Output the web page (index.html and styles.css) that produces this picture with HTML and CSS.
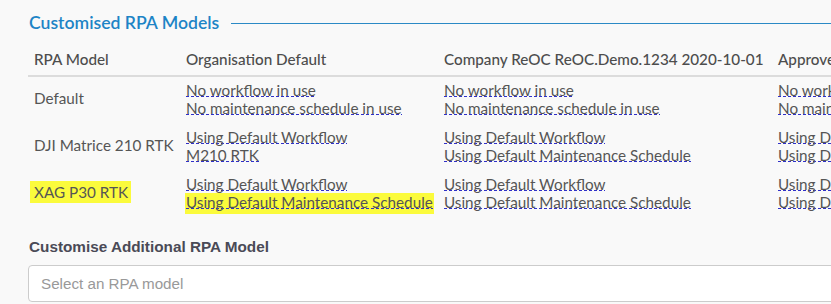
FILE: index.html
```html
<!DOCTYPE html>
<html>
<head>
<meta charset="utf-8">
<link rel="stylesheet" href="styles.css">
</head>
<body>
<div class="page">
  <div class="section-title">
    <h2>Customised RPA Models</h2>
    <div class="rule"></div>
  </div>
  <table class="models">
    <colgroup>
      <col class="c1"><col class="c2"><col class="c3"><col class="c4">
    </colgroup>
    <thead>
      <tr>
        <th>RPA Model</th>
        <th>Organisation Default</th>
        <th>Company ReOC ReOC.Demo.1234 2020-10-01</th>
        <th>Approved Operator</th>
      </tr>
    </thead>
    <tbody>
      <tr>
        <td class="model">Default</td>
        <td><div class="line"><a>No workflow in use</a></div><div class="line"><a>No maintenance schedule in use</a></div></td>
        <td><div class="line"><a>No workflow in use</a></div><div class="line"><a>No maintenance schedule in use</a></div></td>
        <td><div class="line"><a>No workflow in use</a></div><div class="line"><a>No maintenance schedule in use</a></div></td>
      </tr>
      <tr>
        <td class="model">DJI Matrice 210 RTK</td>
        <td><div class="line"><a>Using Default Workflow</a></div><div class="line"><a>M210 RTK</a></div></td>
        <td><div class="line"><a>Using Default Workflow</a></div><div class="line"><a>Using Default Maintenance Schedule</a></div></td>
        <td><div class="line"><a>Using Default Workflow</a></div><div class="line"><a>Using Default Maintenance Schedule</a></div></td>
      </tr>
      <tr>
        <td class="model"><span class="hl hl-model">XAG P30 RTK</span></td>
        <td><div class="line"><a>Using Default Workflow</a></div><div class="line hl-line"><a>Using Default Maintenance Schedule</a></div></td>
        <td><div class="line"><a>Using Default Workflow</a></div><div class="line"><a>Using Default Maintenance Schedule</a></div></td>
        <td><div class="line"><a>Using Default Workflow</a></div><div class="line"><a>Using Default Maintenance Schedule</a></div></td>
      </tr>
    </tbody>
  </table>
  <div class="field">
    <label class="field-label">Customise Additional RPA Model</label>
    <div class="select">Select an RPA model</div>
  </div>
</div>
</body>
</html>
```
FILE: styles.css
```css
html, body {
  margin: 0;
  padding: 0;
  background: #f9f9f9;
  overflow: hidden;
}
.page {
  width: 1000px;
  padding: 11px 0 0 28px;
  font-family: Lato, "Open Sans", sans-serif;
  color: #555;
}
.section-title {
  display: flex;
  align-items: center;
  gap: 12px;
  height: 24px;
}
.section-title h2 {
  margin: 0 0 0 1px;
  font-size: 17.6px;
  font-weight: 600;
  color: #1d84c6;
  white-space: nowrap;
  line-height: 24px;
}
.rule {
  flex: 1;
  height: 1px;
  background: #2b8ac6;
  margin-top: 1px;
}
.models {
  border-collapse: collapse;
  table-layout: fixed;
  width: 950px;
  margin-top: 5px;
  font-size: 15.25px;
  line-height: 18px;
}
.c1 { width: 152px; }
.c2 { width: 258px; }
.c3 { width: 334px; }
.c4 { width: 206px; }
.models th {
  text-align: left;
  font-weight: 500;
  color: #4d4d4d;
  padding: 10px 6px 7px;
  border-bottom: 2px solid #dcdcdc;
  white-space: nowrap;
}
.models td {
  padding: 4px 6px 7px;
  vertical-align: top;
  white-space: nowrap;
}
.models td.model {
  vertical-align: middle;
  padding-bottom: 9px;
}
.line {
  height: 18px;
}
.models a {
  color: #555;
  text-decoration: none;
  background-image: repeating-linear-gradient(90deg, #3030c8 0 3px, transparent 3px 5px);
  background-repeat: no-repeat;
  background-size: 100% 1px;
  background-position: 0 calc(100% - 2px);
}
.hl {
  background: #fbfb3c;
}
.hl-model {
  padding: 2px 3px 2px 4px;
  margin-left: -4px;
}
.hl-line {
  width: fit-content;
  background: #fbfb3c;
  padding: 0 1px;
  margin-left: -1px;
  box-shadow: 0 3px 0 #fbfb3c;
}
.field {
  margin-top: 20px;
}
.field-label {
  display: block;
  margin-left: 1px;
  font-family: "Liberation Sans", Arial, sans-serif;
  font-weight: bold;
  font-size: 15.3px;
  line-height: 18px;
  color: #4a4a56;
}
.select {
  margin-top: 9px;
  box-sizing: border-box;
  height: 37px;
  border: 1px solid #cccccc;
  border-radius: 4px;
  background: #fff;
  padding: 0 12px;
  font-family: "Liberation Sans", Arial, sans-serif;
  font-size: 15.2px;
  line-height: 35px;
  color: #999;
}
```
